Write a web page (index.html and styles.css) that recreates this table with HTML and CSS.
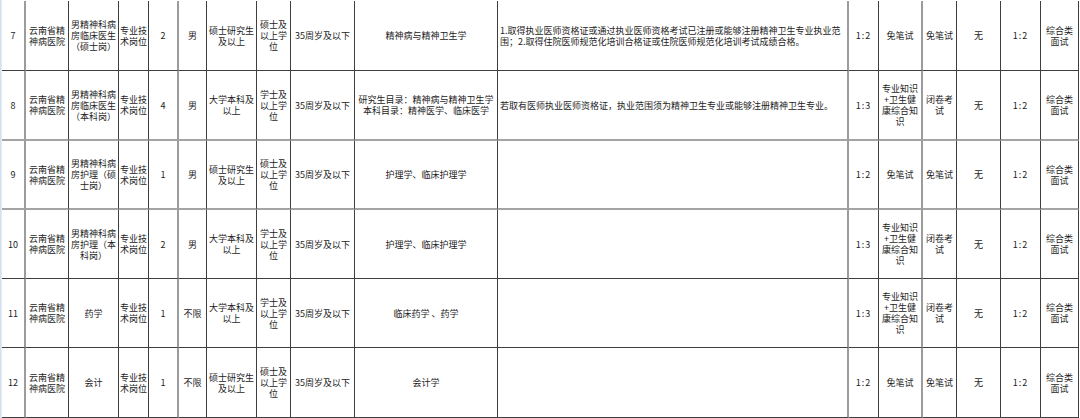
FILE: index.html
```html
<!DOCTYPE html>
<html lang="zh-CN">
<head>
<meta charset="utf-8">
<title>岗位表</title>
<link rel="stylesheet" href="styles.css">
</head>
<body>
<div class="page">
  <div class="edge"></div>
  <div class="sheet">
    <div class="row">
      <div class="c">7</div>
      <div class="c">云南省精<br>神病医院</div>
      <div class="c">男精神科病<br>房临床医生<br>（硕士岗）</div>
      <div class="c">专业技<br>术岗位</div>
      <div class="c">2</div>
      <div class="c">男</div>
      <div class="c">硕士研究生<br>及以上</div>
      <div class="c">硕士及<br>以上学<br>位</div>
      <div class="c">35周岁及以下</div>
      <div class="c">精神病与精神卫生学</div>
      <div class="c">1.取得执业医师资格证或通过执业医师资格考试已注册或能够注册精神卫生专业执业范<br>围；2.取得住院医师规范化培训合格证或住院医师规范化培训考试成绩合格。</div>
      <div class="c">1:2</div>
      <div class="c">免笔试</div>
      <div class="c">免笔试</div>
      <div class="c">无</div>
      <div class="c">1:2</div>
      <div class="c">综合类<br>面试</div>
    </div>
    <div class="row gray">
      <div class="c">8</div>
      <div class="c">云南省精<br>神病医院</div>
      <div class="c">男精神科病<br>房临床医生<br>（本科岗）</div>
      <div class="c">专业技<br>术岗位</div>
      <div class="c">4</div>
      <div class="c">男</div>
      <div class="c">大学本科及<br>以上</div>
      <div class="c">学士及<br>以上学<br>位</div>
      <div class="c">35周岁及以下</div>
      <div class="c">研究生目录：精神病与精神卫生学<br>本科目录：精神医学、临床医学</div>
      <div class="c">若取有医师执业医师资格证，执业范围须为精神卫生专业或能够注册精神卫生专业。</div>
      <div class="c">1:3</div>
      <div class="c">专业知识<br>+卫生健<br>康综合知<br>识</div>
      <div class="c">闭卷考<br>试</div>
      <div class="c">无</div>
      <div class="c">1:2</div>
      <div class="c">综合类<br>面试</div>
    </div>
    <div class="row gray">
      <div class="c">9</div>
      <div class="c">云南省精<br>神病医院</div>
      <div class="c">男精神科病<br>房护理（硕<br>士岗）</div>
      <div class="c">专业技<br>术岗位</div>
      <div class="c">1</div>
      <div class="c">男</div>
      <div class="c">硕士研究生<br>及以上</div>
      <div class="c">硕士及<br>以上学<br>位</div>
      <div class="c">35周岁及以下</div>
      <div class="c">护理学、临床护理学</div>
      <div class="c"></div>
      <div class="c">1:2</div>
      <div class="c">免笔试</div>
      <div class="c">免笔试</div>
      <div class="c">无</div>
      <div class="c">1:2</div>
      <div class="c">综合类<br>面试</div>
    </div>
    <div class="row">
      <div class="c">10</div>
      <div class="c">云南省精<br>神病医院</div>
      <div class="c">男精神科病<br>房护理（本<br>科岗）</div>
      <div class="c">专业技<br>术岗位</div>
      <div class="c">2</div>
      <div class="c">男</div>
      <div class="c">大学本科及<br>以上</div>
      <div class="c">学士及<br>以上学<br>位</div>
      <div class="c">35周岁及以下</div>
      <div class="c">护理学、临床护理学</div>
      <div class="c"></div>
      <div class="c">1:3</div>
      <div class="c">专业知识<br>+卫生健<br>康综合知<br>识</div>
      <div class="c">闭卷考<br>试</div>
      <div class="c">无</div>
      <div class="c">1:2</div>
      <div class="c">综合类<br>面试</div>
    </div>
    <div class="row">
      <div class="c">11</div>
      <div class="c">云南省精<br>神病医院</div>
      <div class="c">药学</div>
      <div class="c">专业技<br>术岗位</div>
      <div class="c">1</div>
      <div class="c">不限</div>
      <div class="c">大学本科及<br>以上</div>
      <div class="c">学士及<br>以上学<br>位</div>
      <div class="c">35周岁及以下</div>
      <div class="c">临床药学 、药学</div>
      <div class="c"></div>
      <div class="c">1:3</div>
      <div class="c">专业知识<br>+卫生健<br>康综合知<br>识</div>
      <div class="c">闭卷考<br>试</div>
      <div class="c">无</div>
      <div class="c">1:2</div>
      <div class="c">综合类<br>面试</div>
    </div>
    <div class="row">
      <div class="c">12</div>
      <div class="c">云南省精<br>神病医院</div>
      <div class="c">会计</div>
      <div class="c">专业技<br>术岗位</div>
      <div class="c">1</div>
      <div class="c">不限</div>
      <div class="c">硕士研究生<br>及以上</div>
      <div class="c">硕士及<br>以上学<br>位</div>
      <div class="c">35周岁及以下</div>
      <div class="c">会计学</div>
      <div class="c"></div>
      <div class="c">1:2</div>
      <div class="c">免笔试</div>
      <div class="c">免笔试</div>
      <div class="c">无</div>
      <div class="c">1:2</div>
      <div class="c">综合类<br>面试</div>
    </div>
  </div>
</div>
</body>
</html>
```
FILE: styles.css
```css
html, body {
  margin: 0;
  padding: 0;
  background: #ffffff;
}

.page {
  display: flex;
  width: 1080px;
  height: 418px;
  overflow: hidden;
  background: #ffffff;
}

.edge {
  width: 2px;
  flex: none;
  background: linear-gradient(to right, #cfdcee, #e8eff8);
}

.sheet {
  display: grid;
  grid-template-columns: 24px 43px 50px 30px 30px 28px 50px 34px 64px 143px 351px 30px 44px 34px 44px 40px 38px;
  grid-template-rows: 70px 70px 69px 69px 69px 70px;
  padding-top: 1px;
  align-content: start;
  font-family: "Noto Sans CJK SC", "Noto Sans", sans-serif;
  font-size: 9px;
  line-height: 11px;
  color: #1c1c1c;
}

.row {
  display: contents;
}

.c {
  box-sizing: border-box;
  display: flex;
  align-items: center;
  justify-content: center;
  text-align: center;
  white-space: nowrap;
  overflow: hidden;
  border-right: 1px solid #3e3e3e;
  border-bottom: 1px solid #3e3e3e;
}

/* lighter, doubled-looking grid lines */
.row > .c:nth-child(1),
.row > .c:nth-child(5),
.row > .c:nth-child(11),
.row > .c:nth-child(13) {
  border-right: 2px solid #9c9c9c;
}

.row.gray > .c {
  border-bottom: 2px solid #a4a4a4;
}

/* free-text requirements column */
.row > .c:nth-child(11) {
  justify-content: flex-start;
  text-align: left;
  padding-left: 2px;
}

/* narrow ratio columns use spaced digits */
.row > .c:nth-child(12),
.row > .c:nth-child(16) {
  letter-spacing: 1px;
}
```
